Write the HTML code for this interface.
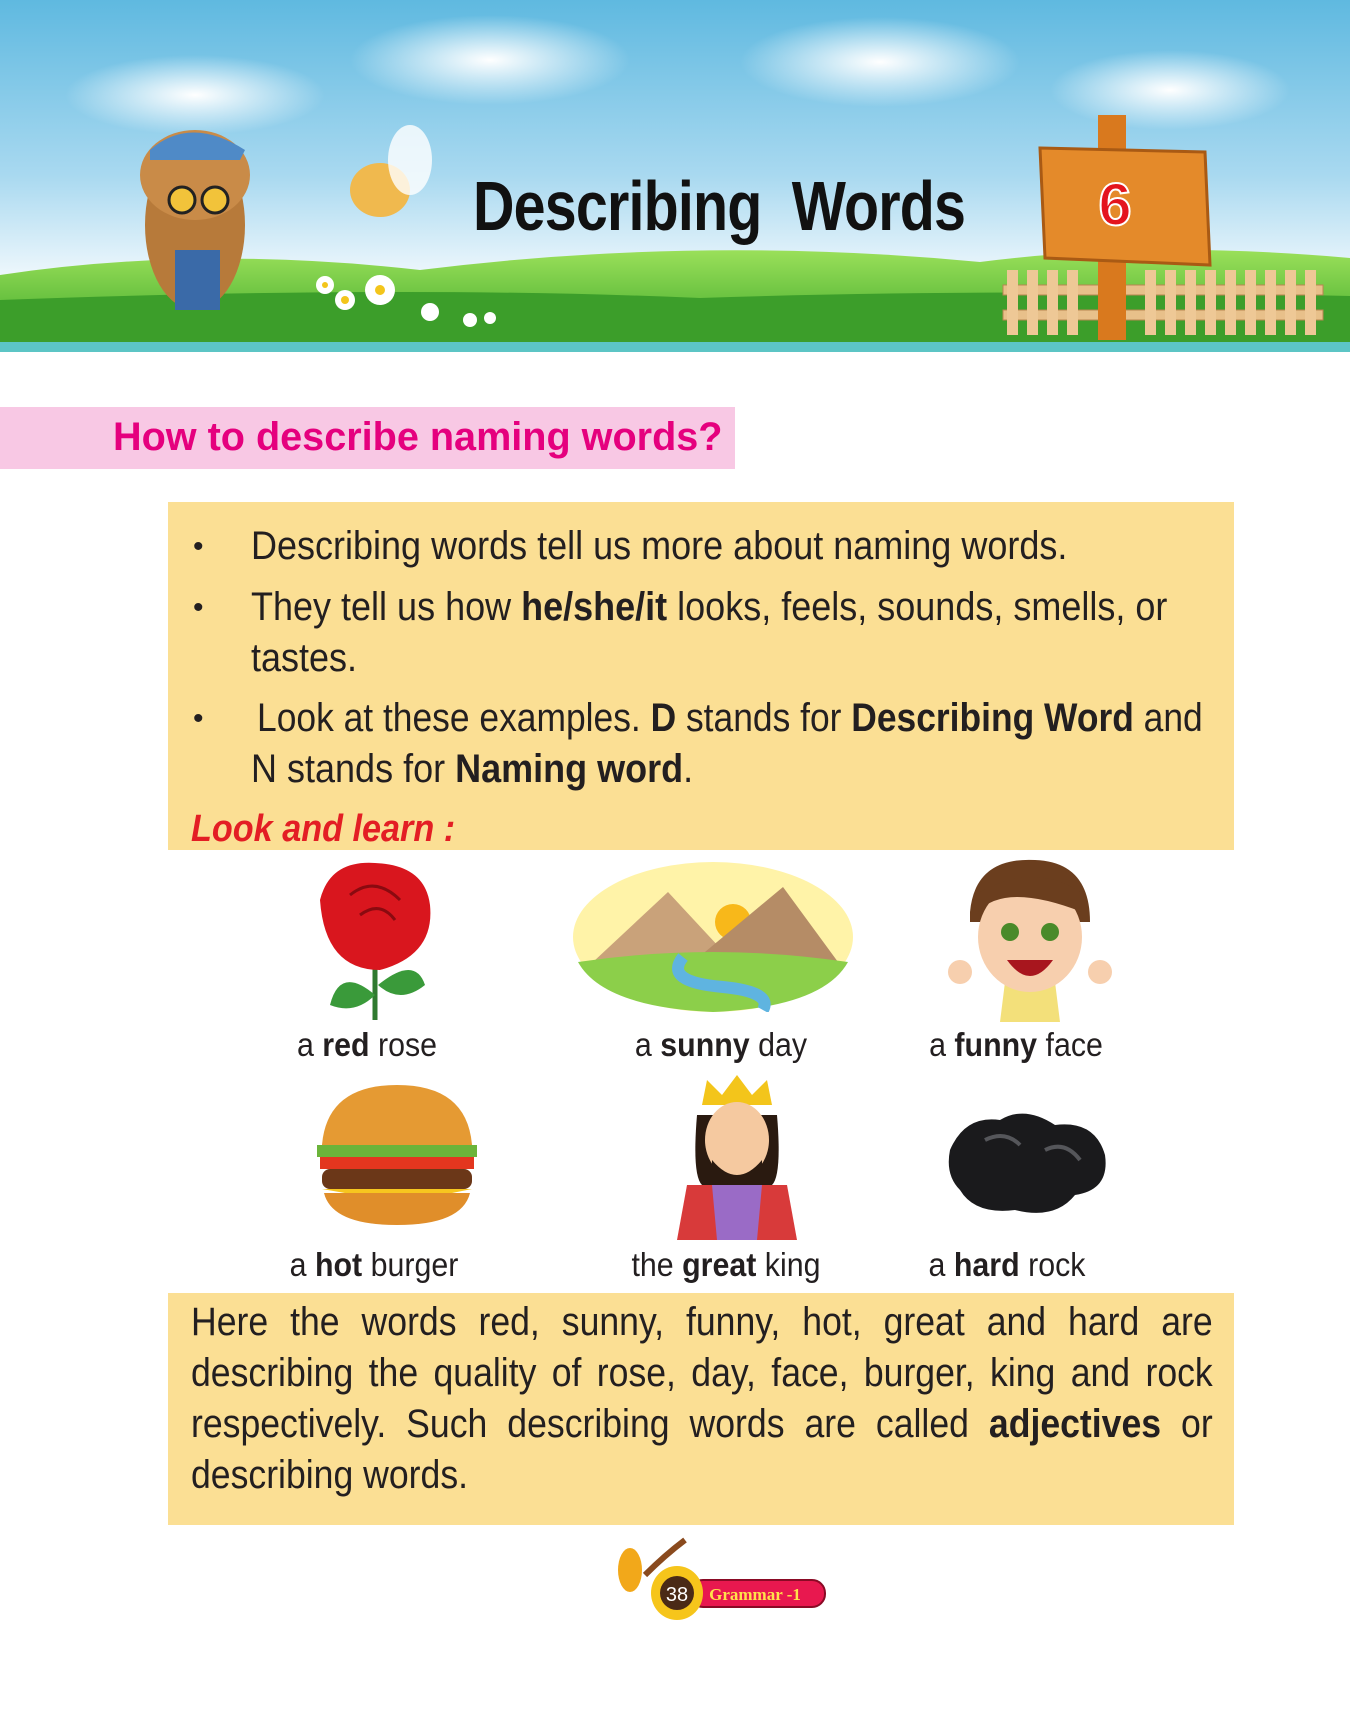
<!DOCTYPE html>
<html><head><meta charset="utf-8">
<style>
*{margin:0;padding:0;box-sizing:border-box}
body{width:1350px;height:1725px;background:#fff;position:relative;overflow:hidden;font-family:"Liberation Sans",sans-serif;color:#231f20}
.abs{position:absolute}
.title{left:473px;top:166px;font-weight:bold;font-size:70px;color:#111;white-space:nowrap;transform:scaleX(0.82);transform-origin:0 0;letter-spacing:-1px}
.pink{left:0;top:407px;width:735px;height:62px;background:#f8c8e4}
.pink span{position:absolute;left:113px;top:8px;font-size:40px;font-weight:bold;color:#e5007e;white-space:nowrap;transform:scaleX(0.99);transform-origin:0 0}
.box{background:#fbdf94}
.li{position:absolute;font-size:40px;white-space:nowrap;line-height:1;transform:scaleX(0.9);transform-origin:0 0}
.dot{position:absolute;left:193px;font-size:30px}
.cap{position:absolute;font-size:33px;white-space:nowrap;text-align:center;width:300px;transform:scaleX(0.92)}
.p2{position:absolute;left:191px;width:1148px;font-size:40px;line-height:51px;text-align:justify;transform:scaleX(0.89);transform-origin:0 0}
</style></head><body>

<svg class="abs" style="left:0;top:0" width="1350" height="352" viewBox="0 0 1350 352">
<defs>
<linearGradient id="sky" x1="0" y1="0" x2="0" y2="1">
<stop offset="0" stop-color="#5fb9e0"/><stop offset="0.5" stop-color="#a9d9f0"/><stop offset="0.8" stop-color="#f2f9fd"/></linearGradient>
<linearGradient id="grass" x1="0" y1="0" x2="0" y2="1">
<stop offset="0" stop-color="#9be05a"/><stop offset="1" stop-color="#3fa82a"/></linearGradient>
<radialGradient id="cl"><stop offset="0" stop-color="#fff"/><stop offset="1" stop-color="#fff" stop-opacity="0"/></radialGradient>
</defs>
<rect width="1350" height="352" fill="url(#sky)"/>
<ellipse cx="195" cy="95" rx="130" ry="40" fill="url(#cl)"/>
<ellipse cx="490" cy="60" rx="140" ry="45" fill="url(#cl)"/>
<ellipse cx="880" cy="62" rx="140" ry="45" fill="url(#cl)"/>
<ellipse cx="1170" cy="90" rx="120" ry="40" fill="url(#cl)"/>
<path d="M0 275 Q200 245 420 270 Q700 235 980 262 Q1150 240 1350 258 L1350 342 L0 342Z" fill="url(#grass)"/>
<path d="M0 300 Q400 285 700 298 Q1000 288 1350 296 L1350 342 L0 342Z" fill="#3c9e2a"/>
<rect y="342" width="1350" height="10" fill="#5cc5c5"/>
<g fill="#e8c08a" stroke="#b78650">
<rect x="1003" y="285" width="320" height="10"/><rect x="1003" y="310" width="320" height="10"/>
</g>
<g fill="#eec896">
<rect x="1007" y="270" width="11" height="65"/><rect x="1027" y="270" width="11" height="65"/><rect x="1047" y="270" width="11" height="65"/><rect x="1067" y="270" width="11" height="65"/>
<rect x="1145" y="270" width="11" height="65"/><rect x="1165" y="270" width="11" height="65"/><rect x="1185" y="270" width="11" height="65"/><rect x="1205" y="270" width="11" height="65"/><rect x="1225" y="270" width="11" height="65"/><rect x="1245" y="270" width="11" height="65"/><rect x="1265" y="270" width="11" height="65"/><rect x="1285" y="270" width="11" height="65"/><rect x="1305" y="270" width="11" height="65"/>
</g>
<rect x="1098" y="115" width="28" height="225" fill="#d9791e"/>
<path d="M1040 148 L1205 152 L1210 265 L1045 258Z" fill="#e48a2a" stroke="#a95a14" stroke-width="3"/>
<text x="1115" y="225" font-family="Liberation Sans" font-weight="bold" font-size="60" fill="#e4141e" stroke="#fff" stroke-width="2" text-anchor="middle">6</text>
<ellipse cx="195" cy="225" rx="50" ry="85" fill="#b77a3a"/>
<ellipse cx="195" cy="175" rx="55" ry="45" fill="#c98b48"/>
<path d="M150 150 Q190 115 245 150 L240 160 L150 160Z" fill="#4f8ac7"/>
<circle cx="182" cy="200" r="13" fill="#f2c33a" stroke="#222" stroke-width="3"/><circle cx="215" cy="200" r="13" fill="#f2c33a" stroke="#222" stroke-width="3"/>
<rect x="175" y="250" width="45" height="60" fill="#3a6aa8"/>
<ellipse cx="380" cy="190" rx="30" ry="27" fill="#f0b94e"/>
<ellipse cx="410" cy="160" rx="22" ry="35" fill="#fff" opacity=".8"/>
<g fill="#fff"><circle cx="380" cy="290" r="15"/><circle cx="345" cy="300" r="10"/><circle cx="325" cy="285" r="9"/><circle cx="430" cy="312" r="9"/><circle cx="470" cy="320" r="7"/><circle cx="490" cy="318" r="6"/></g>
<g fill="#f3c51b"><circle cx="380" cy="290" r="5"/><circle cx="345" cy="300" r="4"/><circle cx="325" cy="285" r="3"/></g>
</svg>
<div class="abs title">Describing&nbsp;&nbsp;Words</div>

<div class="abs pink"><span>How to describe naming words?</span></div>

<div class="abs box" style="left:168px;top:502px;width:1066px;height:348px"></div>
<span class="dot" style="top:530px">•</span>
<div class="li" style="left:251px;top:526px">Describing words tell us more about naming words.</div>
<span class="dot" style="top:591px">•</span>
<div class="li" style="left:251px;top:587px">They tell us how <b>he/she/it</b> looks, feels, sounds, smells, or</div>
<div class="li" style="left:251px;top:638px">tastes.</div>
<span class="dot" style="top:702px">•</span>
<div class="li" style="left:257px;top:698px;transform:scaleX(0.885)">Look at these examples. <b>D</b> stands for <b>Describing Word</b> and</div>
<div class="li" style="left:251px;top:749px">N stands for <b>Naming word</b>.</div>
<div class="li" style="left:191px;top:810px;color:#e31e24;font-weight:bold;font-style:italic;font-size:38px">Look and learn :</div>

<svg class="abs" style="left:300px;top:855px" width="150" height="170" viewBox="0 0 150 170">
<path d="M75 110 L75 165" stroke="#2f7a2f" stroke-width="5"/>
<path d="M75 140 Q40 110 30 150 Q55 160 75 140Z" fill="#3a9a3a"/><path d="M78 130 Q115 100 125 130 Q100 150 78 130Z" fill="#3a9a3a"/>
<path d="M20 45 Q30 5 75 8 Q125 10 130 50 Q135 100 80 115 Q25 115 20 45Z" fill="#d9161e"/>
<path d="M50 40 Q75 20 100 45 M60 60 Q80 45 95 65" stroke="#8a0a10" stroke-width="3" fill="none"/>
</svg>
<svg class="abs" style="left:573px;top:862px" width="280" height="150" viewBox="0 0 280 150">
<ellipse cx="140" cy="75" rx="140" ry="75" fill="#fff3a8"/>
<circle cx="160" cy="60" r="18" fill="#f8b81a"/>
<path d="M20 100 L95 30 L160 100Z" fill="#c9a27a"/><path d="M120 100 L210 25 L265 100Z" fill="#b58c66"/>
<path d="M5 100 Q140 80 275 100 Q250 145 140 150 Q30 145 5 100Z" fill="#8ccf4a"/>
<path d="M110 95 Q90 120 150 125 Q200 130 190 148" stroke="#5fb4e0" stroke-width="12" fill="none"/>
</svg>
<svg class="abs" style="left:945px;top:852px" width="170" height="170" viewBox="0 0 170 170">
<path d="M60 130 L110 130 L115 170 L55 170Z" fill="#f3e07a"/>
<path d="M25 60 Q30 5 90 8 Q145 10 145 70 L25 70Z" fill="#6b3e1e"/>
<ellipse cx="85" cy="85" rx="52" ry="55" fill="#f7cfae"/>
<path d="M33 60 Q60 30 137 60 L135 40 Q90 10 35 40Z" fill="#6b3e1e"/>
<circle cx="65" cy="80" r="9" fill="#4a8a2a"/><circle cx="105" cy="80" r="9" fill="#4a8a2a"/>
<path d="M62 108 Q85 140 108 108Z" fill="#a8161e"/>
<circle cx="15" cy="120" r="12" fill="#f7cfae"/><circle cx="155" cy="120" r="12" fill="#f7cfae"/>
</svg>

<div class="cap" style="left:217px;top:1026px">a <b>red</b> rose</div>
<div class="cap" style="left:571px;top:1026px">a <b>sunny</b> day</div>
<div class="cap" style="left:866px;top:1026px">a <b>funny</b> face</div>

<svg class="abs" style="left:312px;top:1085px" width="170" height="140" viewBox="0 0 170 140">
<path d="M10 60 Q15 0 85 0 Q155 0 160 60Z" fill="#e59a33"/>
<rect x="5" y="60" width="160" height="12" fill="#6bb43a"/>
<rect x="8" y="72" width="154" height="12" fill="#e3361f"/>
<rect x="10" y="84" width="150" height="20" rx="8" fill="#6b3718"/>
<path d="M10 104 L160 104 L90 118Z" fill="#f7c61f"/>
<path d="M12 108 L158 108 Q150 140 85 140 Q20 140 12 108Z" fill="#e08e2a"/>
</svg>
<svg class="abs" style="left:672px;top:1075px" width="130" height="165" viewBox="0 0 130 165">
<path d="M30 30 L35 5 L50 20 L65 0 L80 20 L95 5 L100 30Z" fill="#f3c51b"/>
<path d="M25 40 Q20 100 30 110 L100 110 Q110 100 105 40Z" fill="#2a1a10"/>
<ellipse cx="65" cy="65" rx="32" ry="38" fill="#f5c9a0"/>
<path d="M40 85 Q65 115 90 85 L90 100 Q65 120 40 100Z" fill="#2a1a10"/>
<path d="M5 165 L15 110 L115 110 L125 165Z" fill="#d83a3a"/>
<path d="M40 110 L90 110 L85 165 L45 165Z" fill="#9a6bc6"/>
</svg>
<svg class="abs" style="left:945px;top:1110px" width="165" height="110" viewBox="0 0 165 110">
<path d="M5 40 Q20 5 55 10 Q80 -5 110 15 Q150 10 160 45 Q165 80 130 85 Q110 110 70 100 Q30 105 15 80 Q0 65 5 40Z" fill="#1a1a1c"/>
<path d="M40 30 Q60 20 75 35 M100 40 Q120 30 135 50" stroke="#55565a" stroke-width="4" fill="none"/>
</svg>

<div class="cap" style="left:224px;top:1246px">a <b>hot</b> burger</div>
<div class="cap" style="left:576px;top:1246px">the <b>great</b> king</div>
<div class="cap" style="left:857px;top:1246px">a <b>hard</b> rock</div>

<div class="abs box" style="left:168px;top:1293px;width:1066px;height:232px"></div>
<div class="p2" style="top:1297px">Here the words red, sunny, funny, hot, great and hard are describing the quality of rose, day, face, burger, king and rock respectively. Such describing words are called <b>adjectives</b> or describing words.</div>

<svg class="abs" style="left:605px;top:1535px" width="225" height="85" viewBox="0 0 225 85">
<rect x="85" y="45" width="135" height="27" rx="13" fill="#e8184f" stroke="#8a0a25" stroke-width="2"/>
<text x="150" y="65" font-family="Liberation Serif" font-weight="bold" font-size="17" fill="#ffe24a" text-anchor="middle">Grammar -1</text>
<ellipse cx="72" cy="58" rx="26" ry="27" fill="#f6c51b"/>
<circle cx="72" cy="58" r="17" fill="#4a2a16"/>
<text x="72" y="66" font-family="Liberation Sans" font-size="20" fill="#fff" text-anchor="middle">38</text>
<ellipse cx="25" cy="35" rx="12" ry="22" fill="#f2a81a"/>
<path d="M40 40 Q60 20 80 5" stroke="#8a4a1e" stroke-width="6" fill="none"/>
</svg>
</body></html>
